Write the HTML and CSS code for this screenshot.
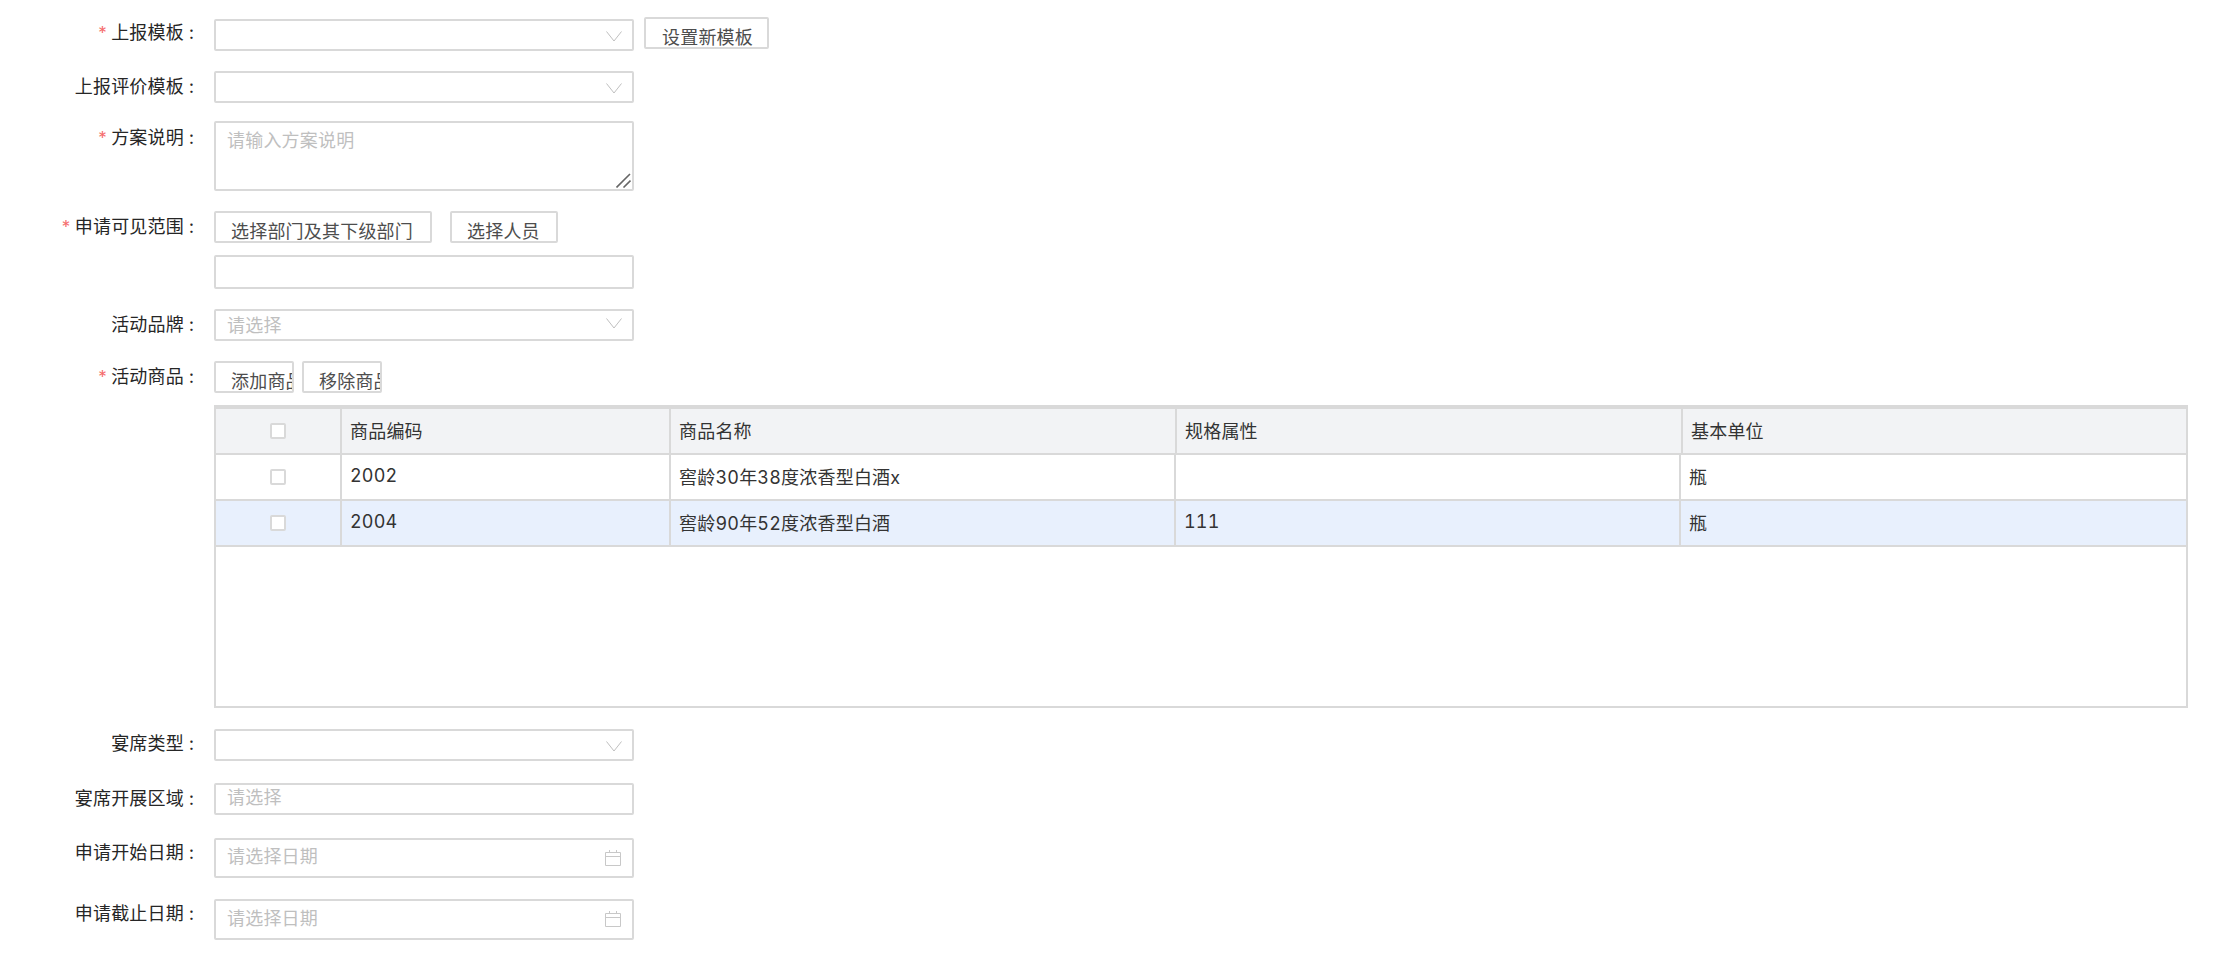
FILE: index.html
```html
<!DOCTYPE html>
<html lang="zh-CN">
<head>
<meta charset="utf-8">
<title>方案表单</title>
<link rel="stylesheet" href="styles.css">
</head>
<body>
<form class="form">
  <div class="row row-first">
    <label class="label"><span class="req">*</span>上报模板<span class="colon">:</span></label>
    <div class="control control-inline">
      <div class="field select offset"><svg class="chev" viewBox="0 0 16 11"><path d="M.5.5 8 10 15.5.5"/></svg></div>
      <button type="button" class="btn btn-template">设置新模板</button>
    </div>
  </div>
  <div class="row row-tight">
    <label class="label">上报评价模板<span class="colon">:</span></label>
    <div class="control"><div class="field select"><svg class="chev" viewBox="0 0 16 11"><path d="M.5.5 8 10 15.5.5"/></svg></div></div>
  </div>
  <div class="row">
    <label class="label label-area"><span class="req">*</span>方案说明<span class="colon">:</span></label>
    <div class="control">
      <div class="field area"><span class="ph">请输入方案说明</span>
        <svg class="grip" viewBox="0 0 15 15"><path d="M.5 14.5 14 1M7.5 14.5 14.5 7.5"/></svg>
      </div>
    </div>
  </div>
  <div class="row">
    <label class="label"><span class="req">*</span>申请可见范围<span class="colon">:</span></label>
    <div class="control">
      <div class="btn-row btn-row-wide">
        <button type="button" class="btn btn-dept">选择部门及其下级部门</button>
        <button type="button" class="btn btn-person">选择人员</button>
      </div>
      <div class="field tall"></div>
    </div>
  </div>
  <div class="row">
    <label class="label">活动品牌<span class="colon">:</span></label>
    <div class="control"><div class="field select"><span class="ph ph-low">请选择</span><svg class="chev chev-up" viewBox="0 0 16 11"><path d="M.5.5 8 10 15.5.5"/></svg></div></div>
  </div>
  <div class="row row-table">
    <label class="label"><span class="req">*</span>活动商品<span class="colon">:</span></label>
    <div class="control control-grow">
      <div class="btn-row">
        <button type="button" class="btn btn-goods">添加商品</button>
        <button type="button" class="btn btn-goods">移除商品</button>
      </div>
      <div class="grid">
        <div class="grid-row grid-head">
          <div class="cell cell-check"><span class="check"></span></div>
          <div class="cell">商品编码</div>
          <div class="cell">商品名称</div>
          <div class="cell">规格属性</div>
          <div class="cell">基本单位</div>
        </div>
        <div class="grid-row">
          <div class="cell cell-check"><span class="check"></span></div>
          <div class="cell">2002</div>
          <div class="cell">窖龄30年38度浓香型白酒x</div>
          <div class="cell"></div>
          <div class="cell">瓶</div>
        </div>
        <div class="grid-row grid-selected">
          <div class="cell cell-check"><span class="check"></span></div>
          <div class="cell">2004</div>
          <div class="cell">窖龄90年52度浓香型白酒</div>
          <div class="cell">111</div>
          <div class="cell">瓶</div>
        </div>
      </div>
    </div>
  </div>
  <div class="row row-22">
    <label class="label label-up">宴席类型<span class="colon">:</span></label>
    <div class="control"><div class="field select"><svg class="chev" viewBox="0 0 16 11"><path d="M.5.5 8 10 15.5.5"/></svg></div></div>
  </div>
  <div class="row row-23">
    <label class="label">宴席开展区域<span class="colon">:</span></label>
    <div class="control"><div class="field select"><span class="ph ph-high">请选择</span></div></div>
  </div>
  <div class="row row-21">
    <label class="label label-up">申请开始日期<span class="colon">:</span></label>
    <div class="control"><div class="field date"><span class="ph ph-high">请选择日期</span>
      <svg class="cal" viewBox="0 0 16 16"><path d="M.5 2.5h15v13H.5zM.5 6.5h15M4.5 0v3M11.5 0v3"/></svg></div></div>
  </div>
  <div class="row">
    <label class="label label-up">申请截止日期<span class="colon">:</span></label>
    <div class="control"><div class="field date date-last"><span class="ph ph-high">请选择日期</span>
      <svg class="cal" viewBox="0 0 16 16"><path d="M.5 2.5h15v13H.5zM.5 6.5h15M4.5 0v3M11.5 0v3"/></svg></div></div>
  </div>
</form>
</body>
</html>
```

FILE: styles.css
```css
* { box-sizing: border-box; }

html, body {
  margin: 0;
  background: #fff;
}

body {
  font-family: Inter, "Noto Sans CJK SC", sans-serif;
  font-size: 18px;
  font-variant-numeric: tabular-nums;
  letter-spacing: .2px;
  color: #262626;
}

.form {
  display: flex;
  flex-direction: column;
  padding: 17px 30px 0 0;
}

.row {
  display: flex;
  align-items: flex-start;
  column-gap: 20px;
  margin-bottom: 20px;
}

.row-tight { margin-bottom: 18px; }
.row-table { margin-bottom: 21px; }
.row-22 { margin-bottom: 22px; }
.row-23 { margin-bottom: 23px; }
.row-21 { margin-bottom: 21px; }

.label {
  flex: none;
  width: 194px;
  line-height: 32px;
  text-align: right;
  white-space: nowrap;
}

.label-area { line-height: 34px; }
.label-up { line-height: 30px; }

.colon { margin-left: 5px; }

.req {
  margin-right: 3px;
  font-size: 17px;
  color: #f56c6c;
}

.control {
  display: flex;
  flex-direction: column;
  row-gap: 12px;
}

.control-inline {
  flex-direction: row;
  column-gap: 10px;
}

.control-grow {
  flex: 1;
  min-width: 0;
}

.field {
  position: relative;
  width: 420px;
  height: 32px;
  padding: 0 11px;
  border: 2px solid #d9d9d9;
  border-radius: 2px;
  background: #fff;
  display: flex;
  align-items: center;
}

.offset { margin-top: 2px; }
.tall { height: 34px; }

.area {
  height: 70px;
  align-items: flex-start;
  padding-top: 7px;
}

.date {
  height: 40px;
}

.date-last { height: 41px; }

.ph {
  color: #bfbfbf;
  line-height: 22px;
}

.ph-low { margin-top: 2px; }
.ph-high { margin-bottom: 2px; }

.chev {
  position: absolute;
  right: 10px;
  top: 10px;
  width: 16px;
  height: 11px;
  fill: none;
  stroke: #bfbfbf;
  stroke-width: 1;
}

.chev-up { top: 7px; }

.grip {
  position: absolute;
  right: 1px;
  bottom: 1px;
  width: 15px;
  height: 15px;
  fill: none;
  stroke: #666;
  stroke-width: 1.6;
}

.cal {
  position: absolute;
  right: 11px;
  top: 10px;
  width: 16px;
  height: 16px;
  fill: none;
  stroke: #c8c8c8;
  stroke-width: 1;
}

.btn-row {
  display: flex;
  column-gap: 8px;
}

.btn-row-wide { column-gap: 18px; }

.btn {
  flex: none;
  height: 32px;
  padding: 9px 0 0 15px;
  border: 2px solid #d9d9d9;
  border-radius: 2px;
  background: #fff;
  font: inherit;
  letter-spacing: inherit;
  line-height: 18px;
  color: #4d4d4d;
  text-align: left;
  white-space: nowrap;
  overflow: hidden;
}

.btn-template { width: 125px; padding-left: 16px; }
.btn-dept { width: 218px; }
.btn-person { width: 108px; }
.btn-goods { width: 80px; }

.grid {
  height: 303px;
  border: 2px solid #d9d9d9;
  border-top-width: 4px;
}

.grid-row {
  display: grid;
  grid-template-columns: 126px 329px 505px 505px 1fr;
  height: 46px;
  border-bottom: 2px solid #d9d9d9;
}

.grid-head {
  grid-template-columns: 126px 329px 506px 506px 1fr;
  background: #f2f3f5;
}

.grid-selected { background: #e8f0fd; }

.cell {
  display: flex;
  align-items: center;
  padding: 0 0 3px 8px;
  border-right: 2px solid #d9d9d9;
  color: #333;
  white-space: nowrap;
}

.cell:last-child {
  border-right: 0;
  padding-left: 8px;
}

.cell-check {
  justify-content: center;
  padding: 0;
}

.cell-check + .cell { padding-left: 8px; }

.check {
  width: 16px;
  height: 16px;
  border: 2px solid #d9d9d9;
  border-radius: 2px;
  background: #fff;
}
```
